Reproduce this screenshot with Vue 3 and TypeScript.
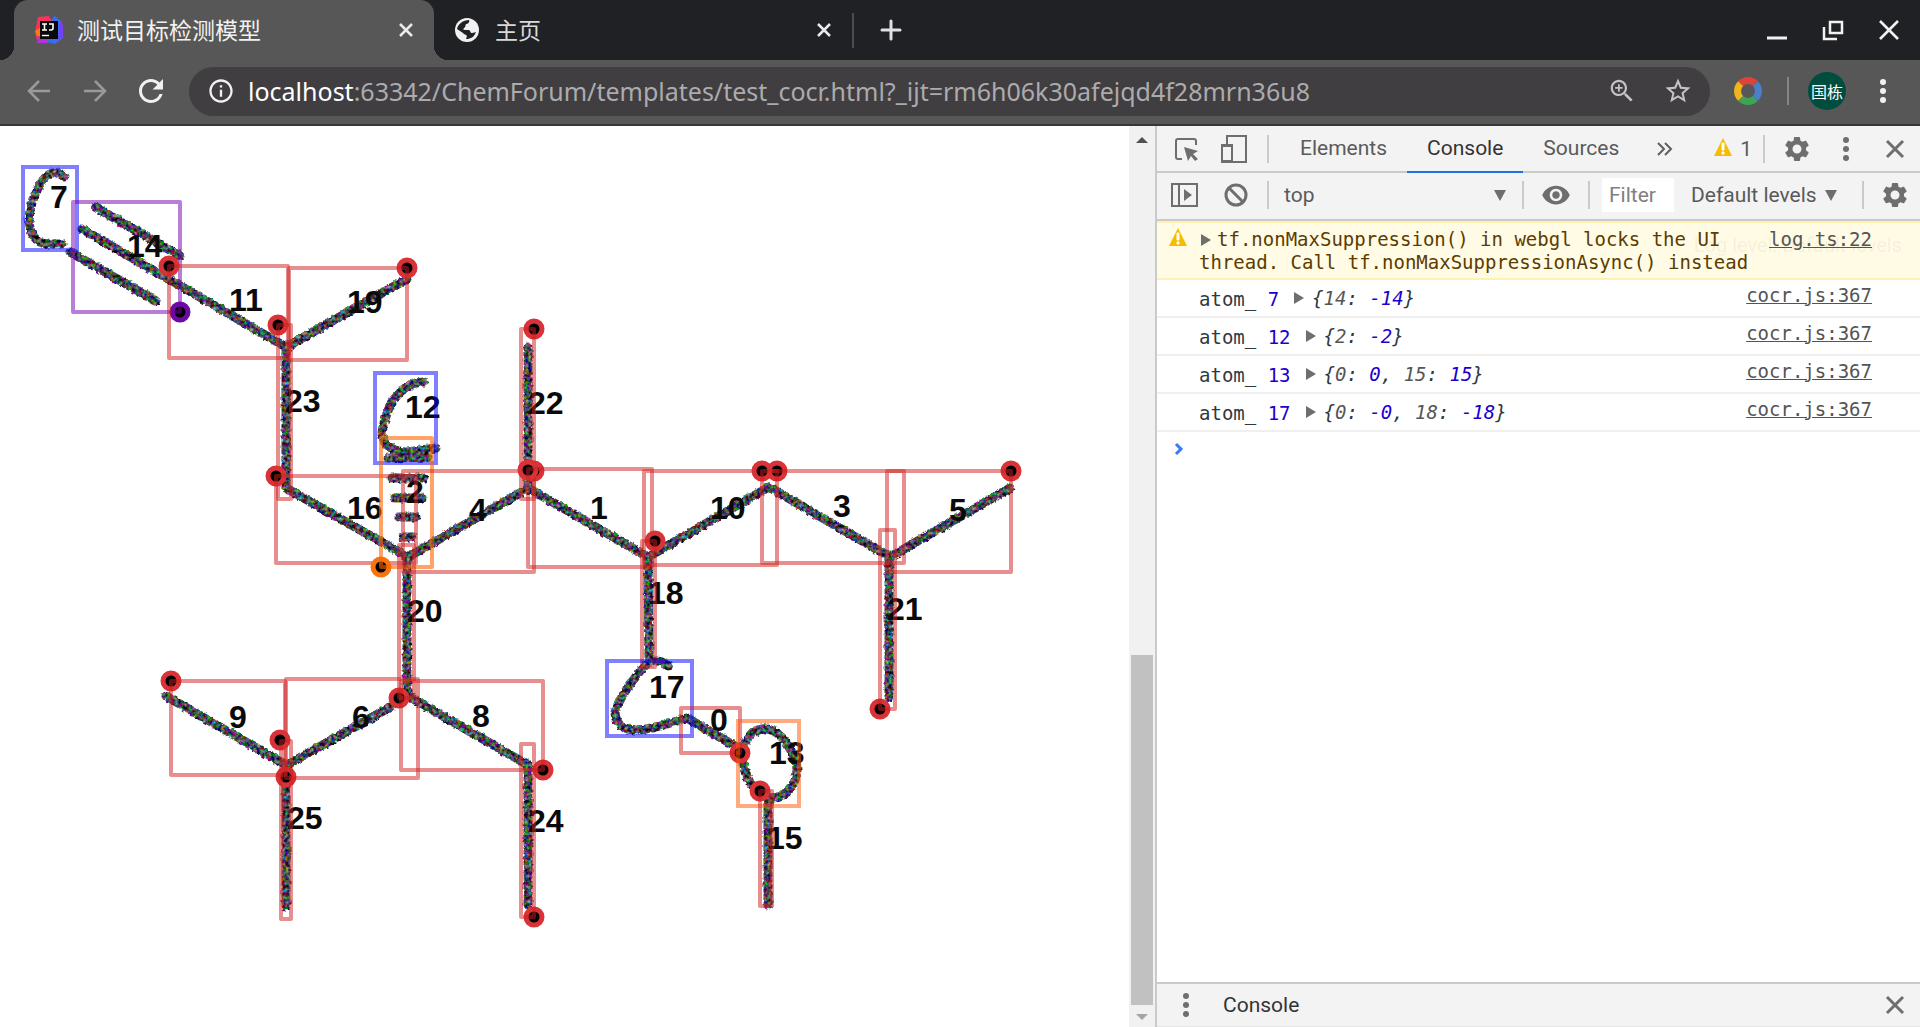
<script setup lang="ts">
interface Detection {
  id: number
  kind: 'carbon' | 'oxygen' | 'single' | 'dash' | 'triple'
  box: [number, number, number, number]
  label: [number, number]
  dot?: [number, number]
}

interface LogRow {
  atom: number
  entries: [string, string][]
}

const detections: Detection[] = [
  { id: 7, kind: 'carbon', box: [23, 167, 77, 250], label: [50, 208] },
  { id: 14, kind: 'triple', box: [73, 202, 180, 312], label: [127, 257], dot: [180, 312] },
  { id: 11, kind: 'single', box: [169, 266, 288, 358], label: [229, 311], dot: [169, 266] },
  { id: 19, kind: 'single', box: [289, 268, 407, 360], label: [347, 313], dot: [407, 268] },
  { id: 23, kind: 'single', box: [278, 325, 291, 499], label: [285, 412], dot: [278, 325] },
  { id: 16, kind: 'single', box: [276, 476, 416, 563], label: [347, 519], dot: [276, 476] },
  { id: 12, kind: 'carbon', box: [375, 373, 436, 463], label: [405, 418] },
  { id: 2, kind: 'dash', box: [381, 438, 432, 567], label: [406, 503], dot: [381, 567] },
  { id: 4, kind: 'single', box: [403, 471, 534, 572], label: [469, 521], dot: [534, 471] },
  { id: 22, kind: 'single', box: [521, 329, 534, 499], label: [528, 414], dot: [534, 329] },
  { id: 1, kind: 'single', box: [528, 469, 652, 567], label: [590, 519], dot: [528, 470] },
  { id: 10, kind: 'single', box: [644, 471, 777, 565], label: [710, 519], dot: [777, 471] },
  { id: 3, kind: 'single', box: [762, 471, 904, 563], label: [833, 517], dot: [762, 471] },
  { id: 5, kind: 'single', box: [887, 471, 1011, 572], label: [949, 521], dot: [1011, 471] },
  { id: 18, kind: 'single', box: [642, 541, 655, 667], label: [648, 604], dot: [655, 541] },
  { id: 21, kind: 'single', box: [880, 530, 895, 709], label: [887, 620], dot: [880, 709] },
  { id: 17, kind: 'carbon', box: [607, 661, 692, 736], label: [649, 698] },
  { id: 0, kind: 'single', box: [681, 708, 740, 753], label: [710, 731], dot: [740, 753] },
  { id: 13, kind: 'oxygen', box: [738, 721, 799, 806], label: [769, 764] },
  { id: 15, kind: 'single', box: [760, 791, 772, 906], label: [767, 849], dot: [760, 791] },
  { id: 20, kind: 'single', box: [399, 545, 414, 698], label: [407, 622], dot: [399, 698] },
  { id: 6, kind: 'single', box: [286, 679, 418, 778], label: [352, 728], dot: [286, 777] },
  { id: 8, kind: 'single', box: [401, 681, 543, 770], label: [472, 727], dot: [543, 770] },
  { id: 9, kind: 'single', box: [171, 681, 285, 775], label: [229, 728], dot: [171, 681] },
  { id: 25, kind: 'single', box: [281, 741, 291, 919], label: [287, 829], dot: [280, 740] },
  { id: 24, kind: 'single', box: [521, 744, 534, 917], label: [528, 832], dot: [534, 917] },
]

const inkPaths: string[] = [
  'M64 177C56 169 47 173 41 183C33 196 29 208 29 221C30 234 36 243 47 244L62 244',
  'M95 207L180 256', 'M82 229L286 347', 'M70 252L156 301',
  'M288 346L407 279', 'M286 350L286 487', 'M286 488L408 557',
  'M424 382C407 382 400 392 391 403C388 412 381 425 382 437C385 447 396 452 407 452L436 448',
  'M388 458L428 457', 'M392 478L424 478', 'M395 498L422 498', 'M399 517L416 517', 'M403 537L412 537',
  'M408 557L527 489', 'M528 347L528 487', 'M528 488L648 557', 'M648 557L769 487',
  'M769 487L890 557', 'M890 557L1010 488', 'M648 556L649 661', 'M889 557L889 697',
  'M668 666C658 657 648 661 641 670C630 684 620 697 615 712C616 726 624 730 638 730C656 729 672 722 687 718',
  'M687 718L740 749',
  'M762 729C748 732 742 745 743 757C744 775 752 795 773 798C790 797 800 778 796 762C790 745 778 727 762 729Z',
  'M768 800L768 905', 'M407 560L407 694', 'M408 697L287 765', 'M166 696L286 765',
  'M408 696L528 765', 'M528 768L528 905', 'M286 770L286 906',
]

const logs: LogRow[] = [
  { atom: 7, entries: [['14', '-14']] },
  { atom: 12, entries: [['2', '-2']] },
  { atom: 13, entries: [['0', '0'], ['15', '15']] },
  { atom: 17, entries: [['0', '-0'], ['18', '-18']] },
]

const gearPath =
  'M19.14 12.94c.04-.3.06-.61.06-.94 0-.32-.02-.64-.07-.94l2.03-1.58c.18-.14.23-.41.12-.61l-1.92-3.32c-.12-.22-.37-.29-.59-.22l-2.39.96c-.5-.38-1.03-.7-1.62-.94l-.36-2.54c-.04-.24-.24-.41-.48-.41h-3.84c-.24 0-.43.17-.47.41l-.36 2.54c-.59.24-1.13.57-1.62.94l-2.39-.96c-.22-.08-.47 0-.59.22L2.74 8.87c-.12.21-.08.47.12.61l2.03 1.58c-.05.3-.09.63-.09.94s.02.64.07.94l-2.03 1.58c-.18.14-.23.41-.12.61l1.92 3.32c.12.22.37.29.59.22l2.39-.96c.5.38 1.03.7 1.62.94l.36 2.54c.05.24.24.41.48.41h3.84c.24 0 .44-.17.47-.41l.36-2.54c.59-.24 1.13-.56 1.62-.94l2.39.96c.22.08.47 0 .59-.22l1.92-3.32c.12-.22.07-.47-.12-.61l-2.01-1.58zM12 15.6c-1.98 0-3.6-1.62-3.6-3.6s1.62-3.6 3.6-3.6 3.6 1.62 3.6 3.6-1.62 3.6-3.6 3.6z'
</script>

<template>
  <div class="browser">
    <header class="tab-strip">
      <div class="tab tab-active">
        <svg class="favicon" viewBox="0 0 28 28" width="28" height="28" aria-hidden="true">
          <path d="M3 1L14 0L17 6L10 22L2 24L0 16Z" fill="#fe315d" />
          <path d="M0 15L6 11L8 20L2 20Z" fill="#f97a12" />
          <path d="M2 27L4 20L18 20L12 27Z" fill="#b134d8" />
          <path d="M16 4L20 0L27 6L28 22L20 28L12 26Z" fill="#3b6cf0" />
          <path d="M25 5L28 9L28 20L23 25Z" fill="#7b3ff2" />
          <rect x="5" y="5" width="18" height="18" fill="#080808" />
          <path d="M7 8h5M7 14h5M9.500 8v6M14 8h4v4q0 2-2 2h-2" fill="none" stroke="#fff" stroke-width="1.600" />
          <path d="M7 19.500h7" stroke="#fff" stroke-width="1.400" />
        </svg>
        <span class="tab-title">测试目标检测模型</span>
        <button class="tab-close" aria-label="关闭标签页">
          <svg viewBox="0 0 28 28" width="28" height="28"><path d="M8 8L20 20M20 8L8 20" /></svg>
        </button>
      </div>
      <div class="tab tab-idle">
        <svg class="globe" viewBox="0 0 24 24" width="24" height="24" aria-hidden="true">
          <circle cx="12" cy="12" r="12" fill="#f1f1f1" />
          <path d="M14 2C15 4 13 6 11 6C10 8 11 9 9 10C8 11 8 12 10 12L14 12C16 13 15 15 17 15C19 15 20 14 21 14C19 19 16 21 11 21L12 18C11 16 9 17 8 15L2 11C3 6 8 2 14 2Z" fill="#202124" />
        </svg>
        <span class="tab-title">主页</span>
        <button class="tab-close" aria-label="关闭标签页">
          <svg viewBox="0 0 28 28" width="28" height="28"><path d="M8 8L20 20M20 8L8 20" /></svg>
        </button>
      </div>
      <button class="new-tab" aria-label="新标签页">
        <svg viewBox="0 0 38 38" width="38" height="38"><path d="M19 10V28M10 19H28" /></svg>
      </button>
      <div class="window-controls">
        <button aria-label="最小化">
          <svg viewBox="0 0 24 24" width="24" height="24"><path d="M2 20H22" stroke-width="3" /></svg>
        </button>
        <button aria-label="还原">
          <svg viewBox="0 0 24 24" width="24" height="24"><path d="M9 4H21V15H9ZM3 9V21H16" stroke-width="2.500" /></svg>
        </button>
        <button aria-label="关闭">
          <svg viewBox="0 0 24 24" width="24" height="24"><path d="M3 3L21 21M21 3L3 21" stroke-width="2.600" /></svg>
        </button>
      </div>
    </header>

    <nav class="toolbar">
      <button class="nav-button dim" aria-label="后退">
        <svg viewBox="0 0 30 30" width="30" height="30"><path d="M26 15H5M15 5L5 15L15 25" /></svg>
      </button>
      <button class="nav-button dim" aria-label="前进">
        <svg viewBox="0 0 30 30" width="30" height="30"><path d="M4 15H25M15 5L25 15L15 25" /></svg>
      </button>
      <button class="nav-button" aria-label="重新加载">
        <svg viewBox="0 0 24 24" width="36" height="36"><path class="solid" d="M17.650 6.350C16.200 4.900 14.210 4 12 4c-4.420 0-7.990 3.580-7.990 8s3.570 8 7.990 8c3.730 0 6.840-2.550 7.730-6h-2.080c-.82 2.330-3.040 4-5.650 4-3.310 0-6-2.690-6-6s2.690-6 6-6c1.660 0 3.140.69 4.220 1.780L13 11h7V4l-2.350 2.350z" /></svg>
      </button>
      <div class="omnibox">
        <svg class="info" viewBox="0 0 24 24" width="28" height="28" aria-hidden="true">
          <path d="M11 7h2v2h-2zm0 4h2v6h-2zm1-9C6.480 2 2 6.480 2 12s4.480 10 10 10 10-4.480 10-10S17.520 2 12 2zm0 18c-4.410 0-8-3.590-8-8s3.590-8 8-8 8 3.590 8 8-3.590 8-8 8z" />
        </svg>
        <div class="url" role="textbox" contenteditable="true" spellcheck="false" aria-label="地址"><span class="host">localhost</span>:63342/ChemForum/templates/test_cocr.html?_ijt=rm6h06k30afejqd4f28mrn36u8</div>
        <button class="omni-icon" aria-label="缩放">
          <svg viewBox="0 0 24 24" width="30" height="30"><path d="M15.500 14h-.79l-.28-.27C15.410 12.590 16 11.110 16 9.500 16 5.910 13.090 3 9.500 3S3 5.910 3 9.500 5.910 16 9.500 16c1.610 0 3.090-.59 4.230-1.570l.27.28v.79l5 4.990L20.490 19l-4.990-5zm-6 0.300C7.010 14.300 4.700 11.990 4.700 9.500S7.010 4.700 9.500 4.700 14.300 7.010 14.300 9.500 11.990 14.300 9.500 14.300z" /><path d="M8.800 6.500h1.400v2.300h2.300v1.400h-2.300v2.300h-1.400v-2.300h-2.300v-1.400h2.300z" /></svg>
        </button>
        <button class="omni-icon" aria-label="收藏">
          <svg viewBox="0 0 24 24" width="30" height="30"><path d="M22 9.240l-7.190-.62L12 2 9.190 8.630 2 9.240l5.460 4.730L5.820 21 12 17.270 18.180 21l-1.630-7.030L22 9.240zM12 15.400l-3.760 2.270 1-4.280-3.320-2.880 4.380-.38L12 6.100l1.710 4.040 4.380.38-3.320 2.880 1 4.280L12 15.400z" /></svg>
        </button>
      </div>
      <button class="extension" aria-label="扩展程序">
        <svg viewBox="0 0 28 28" width="28" height="28" fill="none" stroke-width="7">
          <path d="M6.600 6.600A10.500 10.500 0 0 1 21.400 6.600" stroke="#dc4437" />
          <path d="M21.400 6.600A10.500 10.500 0 0 1 21.400 21.400" stroke="#4a7fcb" />
          <path d="M21.400 21.400A10.500 10.500 0 0 1 6.600 21.400" stroke="#3fa355" />
          <path d="M6.600 21.400A10.500 10.500 0 0 1 6.600 6.600" stroke="#f0b51d" />
        </svg>
      </button>
      <span class="bar-divider"></span>
      <button class="avatar">国栋</button>
      <button class="menu" aria-label="菜单">
        <svg viewBox="0 0 30 30" width="30" height="30"><circle cx="15" cy="6" r="3" /><circle cx="15" cy="15" r="3" /><circle cx="15" cy="24" r="3" /></svg>
      </button>
    </nav>

    <main class="content">
      <section class="page">
        <svg class="molecule" viewBox="0 126 1129 901" role="img" aria-label="检测结果">
          <defs>
            <filter id="grain" filterUnits="userSpaceOnUse" x="0" y="126" width="1129" height="901" color-interpolation-filters="sRGB">
              <feTurbulence type="fractalNoise" baseFrequency="0.28" numOctaves="2" seed="4" result="noise" />
              <feColorMatrix in="noise" type="matrix" values="1.500 0 0 0 -0.480  0 1.500 0 0 -0.470  0 0 1.500 0 -0.430  0 0 0 0 1" result="colour" />
              <feDisplacementMap in="SourceGraphic" in2="noise" scale="4" xChannelSelector="R" yChannelSelector="G" result="rough" />
              <feComposite in="colour" in2="rough" operator="in" />
            </filter>
          </defs>
          <g class="ink" filter="url(#grain)">
            <path v-for="d in inkPaths" :key="d" :d="d" />
          </g>
          <g class="labels">
            <text v-for="item in detections" :key="item.id" :x="item.label[0]" :y="item.label[1]">{{ item.id }}</text>
          </g>
          <g v-for="item in detections" :key="item.id" :class="['mark', item.kind]">
            <circle v-if="item.dot" :cx="item.dot[0]" :cy="item.dot[1]" r="8" />
            <rect :x="item.box[0]" :y="item.box[1]" :width="item.box[2] - item.box[0]" :height="item.box[3] - item.box[1]" />
          </g>
        </svg>
      </section>

      <div class="scrollbar" aria-hidden="true">
        <svg viewBox="0 0 26 26" width="26" height="26"><path d="M7 17L13 11L19 17Z" fill="#505050" /></svg>
        <div class="scroll-track"><div class="scroll-thumb"></div></div>
        <svg viewBox="0 0 26 22" width="26" height="22"><path d="M7 9L13 15L19 9Z" fill="#a3a3a3" /></svg>
      </div>

      <aside class="devtools">
        <div class="dev-tabs">
          <button class="tool inspect" aria-label="Inspect element">
            <svg viewBox="0 0 28 28" width="28" height="28"><path d="M10 24H6Q4 24 4 22V6Q4 4 6 4H22Q24 4 24 6V10" fill="none" stroke="#6e6e6e" stroke-width="2" /><path d="M12 12L26 16L21 19L26 24L23 26L19 21L16 26Z" fill="#6e6e6e" /></svg>
          </button>
          <button class="tool device" aria-label="Toggle device toolbar">
            <svg viewBox="0 0 28 28" width="28" height="28"><path d="M7 9V1H26V27H13" fill="none" stroke="#6e6e6e" stroke-width="2" /><path d="M1 9H13V28H1ZM3 12V25H11V12Z" fill="#6e6e6e" fill-rule="evenodd" /></svg>
          </button>
          <span class="divider"></span>
          <div class="tab-list" role="tablist">
            <button class="dev-tab" role="tab">Elements</button>
            <button class="dev-tab selected" role="tab" aria-selected="true">Console</button>
            <button class="dev-tab" role="tab">Sources</button>
          </div>
          <button class="tool more" aria-label="More tabs">
            <svg viewBox="0 0 18 16" width="18" height="16"><path d="M2 2L8 8L2 14M9 2L15 8L9 14" fill="none" stroke="#5f5f5f" stroke-width="2" /></svg>
          </button>
          <button class="warnings">
            <svg viewBox="0 0 18 18" width="18" height="18" aria-hidden="true"><path d="M9 0L18 18H0Z" fill="#f4bd00" /><path d="M8 5H10V12H8ZM8 14H10V16H8Z" fill="#fff" stroke="#fff" /></svg>
            <span>1</span>
          </button>
          <span class="divider"></span>
          <div class="tool-group">
            <button class="tool" aria-label="Settings"><svg viewBox="0 0 24 24" width="30" height="30"><path :d="gearPath" fill="#6e6e6e" /></svg></button>
            <button class="tool" aria-label="Customize"><svg viewBox="0 0 30 30" width="30" height="30" fill="#6e6e6e"><circle cx="15" cy="6" r="3" /><circle cx="15" cy="15" r="3" /><circle cx="15" cy="24" r="3" /></svg></button>
            <button class="tool" aria-label="Close"><svg viewBox="0 0 30 30" width="30" height="30"><path d="M7 7L23 23M23 7L7 23" stroke="#6e6e6e" stroke-width="3" /></svg></button>
          </div>
        </div>

        <div class="dev-filter">
          <button class="tool sidebar" aria-label="Show console sidebar">
            <svg viewBox="0 0 28 24" width="28" height="24"><path d="M1 1H26V23H1ZM8 1V23" fill="none" stroke="#6e6e6e" stroke-width="2" /><path d="M13 6L21 12L13 18Z" fill="#6e6e6e" /></svg>
          </button>
          <button class="tool clear" aria-label="Clear console">
            <svg viewBox="0 0 24 24" width="24" height="24"><circle cx="12" cy="12" r="10" fill="none" stroke="#6e6e6e" stroke-width="3" /><path d="M5 5L19 19" stroke="#6e6e6e" stroke-width="3" /></svg>
          </button>
          <span class="divider"></span>
          <label class="picker context">
            <select aria-label="JavaScript context"><option>top</option></select>
            <svg viewBox="0 0 12 11" width="12" height="11" aria-hidden="true"><path d="M0 0H12L6 11Z" fill="#6e6e6e" /></svg>
          </label>
          <span class="divider"></span>
          <button class="tool eye" aria-label="Create live expression">
            <svg viewBox="0 0 24 24" width="30" height="30"><path d="M12 4.500C7 4.500 2.730 7.610 1 12c1.730 4.390 6 7.500 11 7.500s9.270-3.110 11-7.500c-1.730-4.390-6-7.500-11-7.500zM12 17c-2.760 0-5-2.240-5-5s2.240-5 5-5 5 2.240 5 5-2.240 5-5 5zm0-8c-1.660 0-3 1.340-3 3s1.340 3 3 3 3-1.340 3-3-1.340-3-3-3z" fill="#6e6e6e" /></svg>
          </button>
          <span class="divider"></span>
          <input class="filter" type="text" placeholder="Filter" aria-label="Filter" />
          <label class="picker levels">
            <select aria-label="Log level"><option>Default levels</option></select>
            <svg viewBox="0 0 12 11" width="12" height="11" aria-hidden="true"><path d="M0 0H12L6 11Z" fill="#6e6e6e" /></svg>
          </label>
          <span class="divider last"></span>
          <button class="tool" aria-label="Console settings"><svg viewBox="0 0 24 24" width="30" height="30"><path :d="gearPath" fill="#6e6e6e" /></svg></button>
        </div>

        <div class="messages">
          <div class="message warning">
            <svg class="warn-icon" viewBox="0 0 18 18" width="18" height="18" aria-hidden="true"><path d="M9 0L18 18H0Z" fill="#f4bd00" /><path d="M8 5H10V12H8ZM8 14H10V16H8Z" fill="#fff" stroke="#fff" /></svg>
            <p class="warn-text"><svg class="expand" viewBox="0 0 10 12" width="10" height="12" aria-hidden="true"><path d="M0 0L10 6L0 12Z" fill="#6e6e6e" /></svg>tf.nonMaxSuppression() in webgl locks the UI<br />thread. Call tf.nonMaxSuppressionAsync() instead</p>
            <a class="source" href="#log">log.ts:22</a>
            <span class="tooltip">Log level: Default levels</span>
          </div>
          <div v-for="row in logs" :key="row.atom" class="message">
            <span class="log-text">atom_ <span class="number">{{ row.atom }}</span></span>
            <svg class="expand" viewBox="0 0 10 12" width="10" height="12" aria-hidden="true"><path d="M0 0L10 6L0 12Z" fill="#6e6e6e" /></svg>
            <em class="preview">{<template v-for="(entry, i) in row.entries" :key="entry[0]"><template v-if="i">, </template><span class="key">{{ entry[0] }}</span>: <span class="number">{{ entry[1] }}</span></template>}</em>
            <a class="source" href="#cocr">cocr.js:367</a>
          </div>
          <div class="prompt">
            <svg viewBox="0 0 10 14" width="10" height="14" aria-hidden="true"><path d="M2 2L7 7L2 12" fill="none" stroke="#367cf1" stroke-width="3" /></svg>
          </div>
        </div>

        <footer class="drawer">
          <button class="tool" aria-label="Drawer menu"><svg viewBox="0 0 30 30" width="30" height="30" fill="#6e6e6e"><circle cx="15" cy="6" r="3" /><circle cx="15" cy="15" r="3" /><circle cx="15" cy="24" r="3" /></svg></button>
          <button class="drawer-tab">Console</button>
          <button class="tool drawer-close" aria-label="Close drawer"><svg viewBox="0 0 30 30" width="30" height="30"><path d="M7 7L23 23M23 7L7 23" stroke="#6e6e6e" stroke-width="3" /></svg></button>
        </footer>
      </aside>
    </main>
  </div>
</template>

<style>
body {
  margin: 0;
  background: #fff;
}
</style>

<style scoped>
.browser {
  display: flex;
  flex-direction: column;
  height: 100vh;
  overflow: hidden;
  font-family: Roboto, "Noto Sans CJK SC", sans-serif;
}
.browser *,
.browser {
  box-sizing: border-box;
}
button {
  display: flex;
  align-items: center;
  justify-content: center;
  padding: 0;
  border: 0;
  background: none;
  font: inherit;
  color: inherit;
}
svg {
  display: block;
  flex: none;
}

.tab-strip {
  display: flex;
  flex: none;
  height: 60px;
  padding: 0 3px 0 14px;
  background: #202124;
}
.tab {
  position: relative;
  display: flex;
  align-items: center;
  height: 60px;
  padding: 0 14px 0 21px;
  font-family: "Noto Sans CJK SC", sans-serif;
  font-size: 23px;
  line-height: 28px;
}
.tab-title {
  padding-bottom: 2px;
}
.tab-active {
  flex: 0 1 420px;
  gap: 14px;
  border-radius: 14px 14px 0 0;
  background: #575757;
  color: #f1f1f1;
}
.tab-active::before,
.tab-active::after {
  content: "";
  position: absolute;
  bottom: 0;
  width: 14px;
  height: 14px;
}
.tab-active::before {
  right: 100%;
  background: radial-gradient(circle at 0 0, #202124 14px, #575757 14px);
}
.tab-active::after {
  left: 100%;
  background: radial-gradient(circle at 100% 0, #202124 14px, #575757 14px);
}
.tab-idle {
  flex: 0 1 420px;
  gap: 16px;
  padding-right: 16px;
  color: #d8d9db;
}
.tab-idle::after {
  content: "";
  position: absolute;
  right: 0;
  top: 13px;
  width: 2px;
  height: 35px;
  background: #4b4c4f;
}
.tab-close {
  margin-left: auto;
}
.tab-close path {
  stroke: #e8eaed;
  stroke-width: 2.5;
}
.new-tab {
  margin-left: 18px;
}
.new-tab path {
  stroke: #dee1e6;
  stroke-width: 3;
  stroke-linecap: round;
}
.window-controls {
  display: flex;
  margin-left: auto;
}
.window-controls button {
  width: 56px;
}
.window-controls path {
  fill: none;
  stroke: #f1f1f1;
}

.toolbar {
  display: flex;
  flex: none;
  align-items: center;
  height: 66px;
  padding: 0 22px 2px 11px;
  border-bottom: 2px solid #383639;
  background: #575757;
}
.nav-button {
  flex: none;
  width: 56px;
  height: 36px;
}
.nav-button path {
  fill: none;
  stroke: #9a9a9a;
  stroke-width: 2.5;
}
.nav-button .solid {
  fill: #f1f1f1;
  stroke: none;
}
.omnibox {
  display: flex;
  flex: 1;
  align-items: center;
  min-width: 0;
  height: 49px;
  margin-left: 10px;
  padding: 0 17px 0 18px;
  border-radius: 25px;
  background: #403e41;
}
.info {
  fill: #f1f1f1;
}
.url {
  flex: 1;
  min-width: 0;
  margin-left: 13px;
  overflow: hidden;
  white-space: nowrap;
  font-family: "Noto Sans", sans-serif;
  font-size: 25px;
  line-height: 34px;
  color: #acabad;
}
.host {
  color: #fff;
}
.omni-icon {
  margin-left: 26px;
}
.omni-icon path {
  fill: #c4c3c5;
}
.extension {
  margin-left: 24px;
}
.bar-divider {
  width: 2px;
  height: 28px;
  margin: 0 19px 0 25px;
  background: #858585;
}
.avatar {
  flex: none;
  width: 38px;
  height: 38px;
  border-radius: 50%;
  background: #004d40;
  color: #fff;
  font-family: "Noto Sans CJK SC", sans-serif;
  font-size: 16px;
  line-height: 20px;
}
.menu {
  margin-left: 22px;
  fill: #f1f1f1;
}

.content {
  display: grid;
  flex: 1;
  grid-template-columns: minmax(0, 1fr) 26px 765px;
  min-height: 0;
}
.page {
  overflow: hidden;
  background: #fff;
}
.molecule {
  width: 100%;
  height: auto;
}
.ink path {
  fill: none;
  stroke: #222;
  stroke-width: 9;
  stroke-linecap: round;
  stroke-linejoin: round;
}
.labels text {
  font-family: "Liberation Sans", Arial, sans-serif;
  font-size: 32px;
  font-weight: 700;
  fill: #0a0a0a;
}
.mark rect {
  fill: none;
  stroke: #d01f1f;
  stroke-opacity: 0.5;
  stroke-width: 4;
  stroke-linejoin: round;
}
.mark circle {
  fill: #000;
  stroke: #d93237;
  stroke-width: 5;
}
.mark.triple rect {
  stroke: #7400ad;
}
.mark.triple circle {
  stroke: #6d0aa6;
}
.mark.dash rect {
  stroke: #ff6600;
  stroke-opacity: 0.6;
}
.mark.dash circle {
  stroke: #f77411;
}
.mark.carbon rect {
  stroke: #0000ff;
  stroke-linejoin: miter;
}
.mark.oxygen rect {
  stroke: #ff5500;
  stroke-linejoin: miter;
}

.scrollbar {
  display: flex;
  flex-direction: column;
  min-height: 0;
  background: #f1f1f1;
}
.scroll-track {
  display: flex;
  flex: 1;
  flex-direction: column;
  justify-content: flex-end;
  padding: 0 2px;
}
.scroll-thumb {
  height: 41%;
  background: #c1c1c1;
}

.devtools {
  display: flex;
  flex-direction: column;
  min-width: 0;
  min-height: 0;
  border-left: 2px solid #cacaca;
  background: #fff;
  font-size: 21px;
  line-height: 24px;
  color: #5a5a5a;
}
.dev-tabs,
.dev-filter {
  display: flex;
  flex: none;
  align-items: center;
  padding-right: 10px;
  background: #f3f3f3;
  border-bottom: 2px solid #cacaca;
}
.dev-tabs {
  height: 47px;
}
.dev-filter {
  height: 48px;
  padding-bottom: 2px;
}
.tool {
  flex: none;
}
.divider {
  flex: none;
  width: 2px;
  height: 28px;
  background: #cacaca;
}
.inspect {
  margin-left: 15px;
}
.device {
  margin: 0 19px 0 20px;
}
.tab-list {
  display: flex;
  align-self: stretch;
  margin-left: 11px;
}
.dev-tab {
  height: 48px;
  padding: 0 20px 2px;
  border-bottom: 3px solid transparent;
}
.dev-tab.selected {
  border-color: #1a73e8;
  color: #333;
}
.more {
  margin-left: 17px;
}
.warnings {
  gap: 8px;
  margin: 0 11px 0 auto;
}
.warnings svg {
  margin-bottom: 4px;
}
.tool-group {
  display: flex;
  gap: 19px;
  margin-left: 17px;
}
.sidebar {
  margin-left: 14px;
}
.clear {
  margin: 0 19px 0 25px;
}
.picker {
  display: flex;
  align-items: center;
}
.picker select {
  flex: 1;
  min-width: 0;
  padding: 0;
  border: 0;
  appearance: none;
  background: none;
  font: inherit;
  color: #5a5a5a;
}
.context {
  flex: 1;
  margin: 0 16px 0 15px;
}
.eye {
  margin: 0 17px;
}
.filter {
  width: 72px;
  height: 34px;
  margin: 0 17px 0 12px;
  padding: 0 7px;
  border: 0;
  background: #fff;
  font: inherit;
}
.filter::placeholder {
  color: #808080;
  opacity: 1;
}
.levels {
  gap: 8px;
}
.last {
  margin: 0 16px 0 25px;
}

.messages {
  flex: 1;
  min-height: 0;
  overflow: hidden;
  font-family: "DejaVu Sans Mono", monospace;
  font-size: 19px;
  line-height: 23px;
}
.message {
  position: relative;
  display: flex;
  align-items: center;
  height: 38px;
  padding: 0 48px 0 42px;
  border-bottom: 2px solid #f0f0f0;
  color: #303942;
}
.message.warning {
  align-items: flex-start;
  height: 59px;
  padding: 5px 48px 0 12px;
  border-top: 2px solid #fff0b3;
  border-bottom-color: #fff0b3;
  background: #fffbe5;
  color: #5c3c00;
}
.warn-text {
  margin: 0 0 0 12px;
  white-space: nowrap;
}
.expand {
  display: inline-block;
}
.warn-text .expand {
  margin: 0 6px 0 2px;
}
.log-text {
  padding-top: 2px;
  white-space: pre;
}
.message > .expand {
  margin: 0 8px 0 15px;
}
.number {
  color: #1c00cf;
}
.preview {
  white-space: pre;
}
.preview .key {
  color: #565656;
}
.source {
  margin-left: auto;
  color: #545454;
  text-decoration: underline;
}
.message:not(.warning) .source {
  padding-bottom: 6px;
}
.tooltip {
  position: absolute;
  right: 18px;
  top: 10px;
  font-family: Roboto, sans-serif;
  font-size: 20px;
  line-height: 24px;
  color: #5a5a5a;
  opacity: 0.06;
  pointer-events: none;
}
.prompt {
  padding: 10px 17px;
}
.drawer {
  display: flex;
  flex: none;
  align-items: center;
  height: 45px;
  padding: 0 10px 0 14px;
  border-top: 2px solid #cacaca;
  border-bottom: 1px solid #e6e6e6;
  background: #f3f3f3;
}
.drawer-tab {
  margin-left: 22px;
  color: #333;
}
.drawer-close {
  margin-left: auto;
}
</style>
